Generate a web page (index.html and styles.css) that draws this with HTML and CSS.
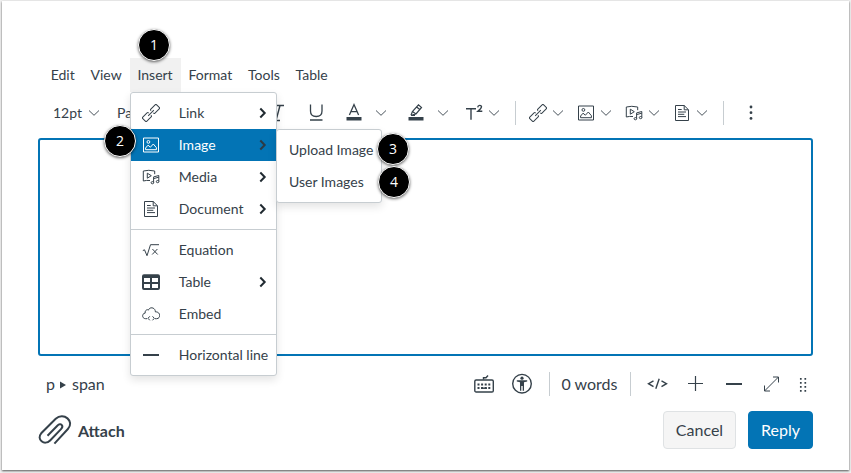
FILE: index.html
```html
<!DOCTYPE html>
<html lang="en">
<head>
<meta charset="utf-8">
<title>Reply editor</title>
<link rel="stylesheet" href="styles.css">
</head>
<body>
<svg class="sprite" aria-hidden="true">
  <symbol id="link" viewBox="0 0 18 18"><g transform="rotate(-45 9 9)"><path d="M7.300 7.400V7Q7.300 6.100 6.300 6.100H.3Q-.8 6.100-.8 7.200V10.800Q-.8 11.900.3 11.900H6.300Q7.300 11.900 7.300 11V10.600M10.700 7.400V7Q10.700 6.100 11.700 6.100H17.700Q18.800 6.100 18.800 7.200V10.800Q18.800 11.900 17.700 11.900H11.700Q10.700 11.900 10.700 11V10.600M5 9H13"/></g></symbol>
  <symbol id="image" viewBox="0 0 18 18"><path d="M1.500 2H16.500V16H1.500ZM3.600 13.700V12L6 9.200L8.400 11.200L11.300 8L14.400 11.700V13.700Z"/><circle cx="6.400" cy="5.900" r="1.400"/></symbol>
  <symbol id="media" viewBox="0 0 18 18"><path d="M8 12.500Q4.500 12.100 1.300 13V3Q6.500 1.600 12.700 3V6.200M5.300 5.200V10.200L9.300 7.700ZM11.600 14.500V8.900L16.800 7.500V13.300M11.600 10.600L16.800 9.200"/><ellipse cx="10.400" cy="14.700" rx="1.300" ry="1.100"/><ellipse cx="15.600" cy="13.600" rx="1.300" ry="1.100"/></symbol>
  <symbol id="document" viewBox="0 0 18 18"><path d="M2.500 1.500H11.200L15.500 5.800V16.500H2.500ZM11.200 1.500V5.800H15.500M5 5.500H8.700M5 8H13M5 10.300H11.300M5 12.600H13"/></symbol>
  <symbol id="equation" viewBox="0 0 18 18"><path d="M.8 9.600L2.500 8.800L5 14.700L8.500 3.700H17M10.400 8L15.700 13.500M15.400 8L10.200 13.500"/></symbol>
  <symbol id="table" viewBox="0 0 18 18"><path class="solid" fill-rule="evenodd" d="M2 1.200H16Q18 1.200 18 3.200V15Q18 17 16 17H2Q0 17 0 15V3.200Q0 1.200 2 1.200ZM2 5V9H8V5ZM10 5V9H16V5ZM2 11V15H8V11ZM10 11V15H16V11Z"/></symbol>
  <symbol id="embed" viewBox="0 0 18 18"><path d="M5 13.700H3.700C-.4 13.700-.2 8.200 3.200 8.100C2.600 4.900 5.800 4.100 6.500 5.100C7.200 1.800 13.200 1.800 13.400 6.900C18.700 6.400 19 13.700 14.600 13.700H13M7.800 11.300L6 13.300L7.800 15.300M10.500 11.300L12.300 13.300L10.500 15.300"/></symbol>
  <symbol id="line" viewBox="0 0 18 18"><path class="heavy" d="M1 9H17"/></symbol>
  <symbol id="chevron" viewBox="0 0 12 8"><path d="M1 1.500L6 6.300L11 1.500"/></symbol>
  <symbol id="arrow" viewBox="0 0 8 12"><path class="heavy" d="M1.300 1.500L5.700 6L1.300 10.500"/></symbol>
</svg>

<main class="window">
  <nav class="menubar">
    <span>Edit</span><span>View</span><span class="open">Insert</span><span>Format</span><span>Tools</span><span>Table</span>
  </nav>

  <div class="toolbar">
    <div class="group size">12pt<svg class="chev"><use href="#chevron"/></svg></div>
    <span class="para">Paragraph</span>
    <div class="group styles">
      <svg class="tool" viewBox="0 0 18 18"><path class="medium" d="M7 1.500H15M3 16.500H11M11 1.500L7 16.500"/></svg>
      <svg class="tool" viewBox="0 0 18 18"><path d="M3.500 .5V7Q3.500 12.500 9.200 12.500Q15 12.500 15 7V.5M3 16H15.500" stroke-width="1.300"/></svg>
    </div>
    <div class="group color">
      <svg class="tool" viewBox="0 0 18 18"><path d="M4.400 11L9 .5L13.600 11M6 7.700H12" stroke-width="1.300"/><path class="solid" d="M1.500 13H16.500V16.500H1.500Z"/></svg>
      <svg class="chev"><use href="#chevron"/></svg>
    </div>
    <div class="group color">
      <svg class="tool" viewBox="0 0 18 18"><path d="M4 11.300L5.400 7.600L11.500 .9L14.500 3.500L9 10L5.400 10.900M5.400 7.600L9 10M9.800 3L12.600 5.500M4 11.300H8" stroke-width="1.200"/><path class="solid" d="M1.500 13H16.500V16.500H1.500Z"/></svg>
      <svg class="chev"><use href="#chevron"/></svg>
    </div>
    <div class="group script">
      <svg class="tool" viewBox="0 0 18 18"><path class="medium" d="M1 4.700H11M6 4.700V15.700M12.700 3.300Q13 1.300 14.800 1.400Q17.800 1.800 15.500 4.700L12.800 7.300H17.300"/></svg>
      <svg class="chev"><use href="#chevron"/></svg>
    </div>
    <i class="rule"></i>
    <div class="inserts">
      <div class="group"><svg class="tool"><use href="#link"/></svg><svg class="chev"><use href="#chevron"/></svg></div>
      <div class="group"><svg class="tool"><use href="#image"/></svg><svg class="chev"><use href="#chevron"/></svg></div>
      <div class="group"><svg class="tool"><use href="#media"/></svg><svg class="chev"><use href="#chevron"/></svg></div>
      <div class="group"><svg class="tool"><use href="#document"/></svg><svg class="chev"><use href="#chevron"/></svg></div>
    </div>
    <i class="rule"></i>
    <svg class="tool more" viewBox="0 0 18 18"><g class="solid"><circle cx="9" cy="3" r="1.400"/><circle cx="9" cy="8.700" r="1.400"/><circle cx="9" cy="14.400" r="1.400"/></g></svg>
  </div>

  <div class="editor"></div>

  <div class="status">
    <div class="path">p <svg viewBox="0 0 6 8"><path class="solid" d="M0 .5L6 4L0 7.500Z"/></svg> span</div>
    <div class="controls">
      <svg class="tool big" viewBox="0 0 20 20"><rect class="medium" x=".8" y="6" width="18.500" height="12" rx="1.300"/><path class="medium" d="M9.500 5.500V3.700H12L14 1.500"/><path class="keys" d="M3.500 10.500H16.500M3.500 14H16.500"/><path class="medium" d="M7 14.200H13"/></svg>
      <svg class="tool big" viewBox="0 0 20 20"><circle class="medium" cx="10" cy="9.700" r="9.300"/><circle class="solid" cx="10" cy="4.200" r="1.600"/><path class="solid" d="M4.800 6.200H15.200V7.400L12 8.200V16.700H10.700V12H9.300V16.700H8V8.200L4.800 7.400Z"/></svg>
      <i class="rule"></i>
      <span class="words">0 words</span>
      <i class="rule"></i>
      <svg class="tool big" viewBox="0 0 20 20"><path class="medium" d="M6.500 6.800L1.500 9.700L6.500 12.600M14.500 6.800L19.500 9.700L14.500 12.600M12.200 4.800L8.800 14.800"/></svg>
      <svg class="tool" viewBox="0 0 18 18"><path d="M2 8.500H17M9.500 1V16" stroke-width="1.200"/></svg>
      <svg class="tool"><use href="#line"/></svg>
      <svg class="tool" viewBox="0 0 18 18"><path d="M2.500 16L16.500 2M11 2H16.500V7.500M2.500 10.500V16H8"/></svg>
      <svg class="tool" viewBox="0 0 18 18"><path class="dots" d="M6.800 3V17.500M11.300 3V17.500"/></svg>
    </div>
  </div>

  <footer class="footer">
    <div class="attach">
      <svg viewBox="0 0 34 32"><path d="M9.500 20.700L19.300 10.700C22.900 7.200 26.100 10.900 23 14.100L12.100 25.500C6.500 31.200-2 24.300 3.200 18.300L17.700 3.700C25.700-3.300 37 6.400 29.900 14L16.400 28.600"/></svg>
      <span>Attach</span>
    </div>
    <button class="button">Cancel</button>
    <button class="button primary">Reply</button>
  </footer>

  <div class="menu insert-menu">
    <div class="item"><svg class="tool"><use href="#link"/></svg><span>Link</span><svg class="arrow"><use href="#arrow"/></svg></div>
    <div class="item active"><svg class="tool"><use href="#image"/></svg><span>Image</span><svg class="arrow"><use href="#arrow"/></svg></div>
    <div class="item"><svg class="tool"><use href="#media"/></svg><span>Media</span><svg class="arrow"><use href="#arrow"/></svg></div>
    <div class="item"><svg class="tool"><use href="#document"/></svg><span>Document</span><svg class="arrow"><use href="#arrow"/></svg></div>
    <hr>
    <div class="item"><svg class="tool"><use href="#equation"/></svg><span>Equation</span></div>
    <div class="item"><svg class="tool"><use href="#table"/></svg><span>Table</span><svg class="arrow"><use href="#arrow"/></svg></div>
    <div class="item"><svg class="tool"><use href="#embed"/></svg><span>Embed</span></div>
    <hr>
    <div class="item"><svg class="tool"><use href="#line"/></svg><span>Horizontal line</span></div>
  </div>
  <div class="menu image-menu">
    <div class="item">Upload Image</div>
    <div class="item">User Images</div>
  </div>

  <b class="badge one">1</b>
  <b class="badge two">2</b>
  <b class="badge three">3</b>
  <b class="badge four">4</b>
</main>
</body>
</html>
```

FILE: styles.css
```css
* { box-sizing: border-box; }
body {
  margin: 0;
  padding: 1px 2px 3px;
  height: 473px;
  overflow: hidden;
  background: #f0f0f0;
  color: #35414a;
  font: 14px/20px Lato, sans-serif;
}
.sprite { position: absolute; width: 0; height: 0; }
svg { display: block; fill: none; stroke: currentColor; stroke-width: 1; flex: none; overflow: visible; }
.medium { stroke-width: 1.4; }
.heavy { stroke-width: 2; }
.solid { fill: currentColor; stroke: none; }
.keys { stroke-width: 2; stroke-dasharray: 2 1.6; }
.dots { stroke-width: 1.7; stroke-dasharray: 1.7 2.3; }
.tool { width: 18px; height: 18px; }
.tool.big { width: 20px; height: 20px; }

.window {
  height: 469px;
  padding: 57px 36px 0;
  background: #fff;
  box-shadow: 0 1px 2px #555;
}
.menubar { display: flex; height: 34px; padding-left: 4.8px; }
.menubar span { padding: 0 7.9px; line-height: 34px; }
.menubar .open { background: #f1f1f1; }

.toolbar { display: flex; align-items: center; height: 42px; padding-left: 15px; }
.group { display: flex; align-items: center; gap: 5px; }
.chev { width: 12px; height: 8px; stroke-width: .9; }
.size { width: 64px; gap: 6px; }
.para { width: 152px; overflow: hidden; }
.styles { gap: 20px; margin-right: 20px; }
.color { gap: 12px; margin-right: 20px; }
.script { margin: 0 15px 0 -4px; }
.inserts { display: flex; gap: 13px; margin: 0 15px 0 13px; }
.more { margin-left: 18px; }
.rule { flex: none; width: 1px; height: 24px; background: #c7cdd1; }

.editor { height: 218px; margin-top: 4px; border: 2px solid #0374b5; border-radius: 3px; }
.status { display: flex; align-items: center; justify-content: space-between; height: 55px; padding-left: 8px; font-size: 16px; }
.path { display: flex; align-items: center; gap: 5.5px; }
.path svg { width: 6px; height: 8px; margin-top: 2px; }
.controls {
  display: grid;
  grid-template-columns: 38px 38px 16px 65px 16px 38px 38px 39px 36px 28px;
  align-items: center;
  justify-items: center;
  margin-right: -4px;
}
.footer { display: flex; align-items: center; gap: 12px; height: 38px; }
.attach { display: flex; align-items: center; gap: 6px; margin-right: auto; padding-top: 1px; font-size: 16px; font-weight: 700; }
.attach svg { width: 34px; height: 32px; stroke-width: 2; }
.button { height: 38px; width: 73px; padding: 0; border: 1px solid #dfe2e4; border-radius: 4px; background: #f5f5f5; color: #35414a; font: 16px/20px Lato, sans-serif; }
.primary { width: 65px; border-color: #0374b5; background: #0374b5; color: #fff; }

.menu { position: absolute; padding: 4px 0; border: 1px solid #c7cdd1; border-radius: 3px; background: #fff; box-shadow: 0 4px 9px #0000001c; }
.insert-menu { left: 130px; top: 92px; width: 147px; }
.image-menu { left: 276px; top: 129px; width: 106px; }
.item { display: flex; align-items: center; height: 32px; padding-left: 11px; white-space: nowrap; }
.insert-menu .item { padding-left: 10.5px; }
.image-menu .item { padding-left: 12px; }
.item span { margin-left: 19.3px; }
.item .arrow { width: 8px; height: 12px; margin: 0 9px 0 auto; color: #202a31; }
.item.active { background: #0374b5; color: #fff; }
.item.active .arrow { color: #2d3b45; }
.menu hr { height: 1px; margin: 4px 0; border: 0; background: #c7cdd1; }

.badge { position: absolute; width: 32px; height: 32px; border: 1.5px solid #fff; border-radius: 50%; background: #000; color: #fff; box-shadow: 0 1px 3px #0009; font: 14px/29px "Open Sans", sans-serif; text-align: center; }
.one { left: 138px; top: 29px; }
.two { left: 104px; top: 125px; }
.three { left: 377px; top: 133px; }
.four { left: 378px; top: 166px; }
```
